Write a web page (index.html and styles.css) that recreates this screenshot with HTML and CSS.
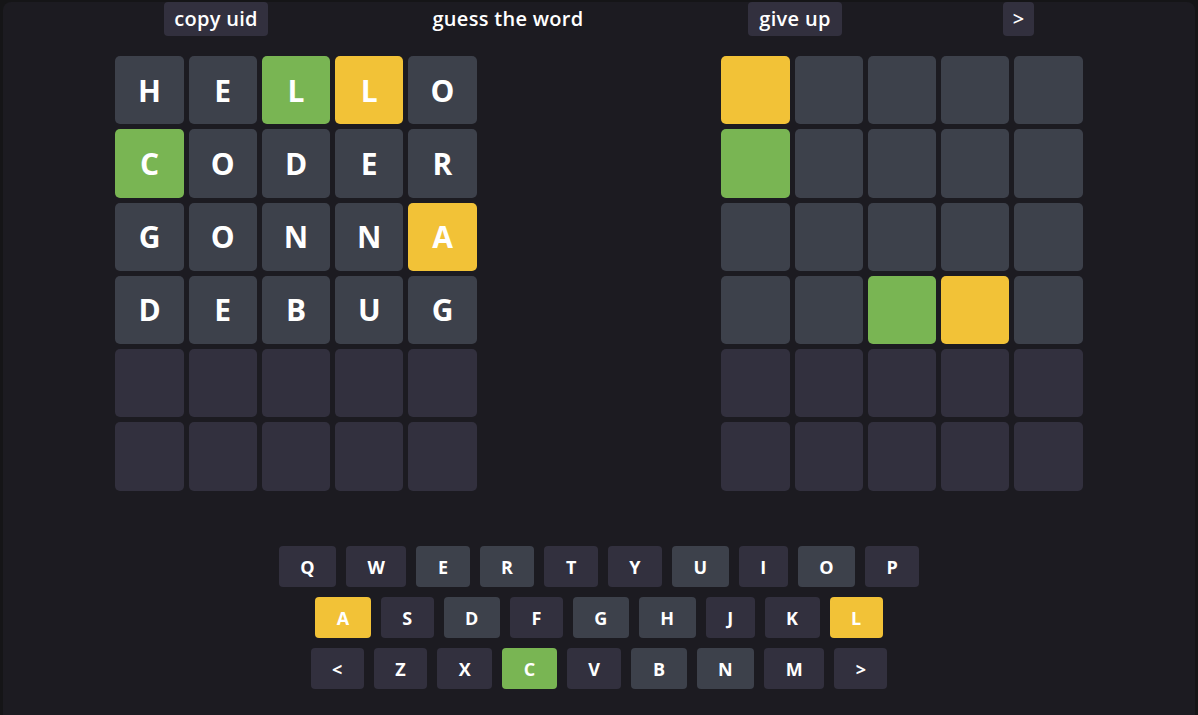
FILE: index.html
```html
<!DOCTYPE html>
<html>
<head>
<meta charset="utf-8">
<title>guess the word</title>
<link rel="stylesheet" href="styles.css">
</head>
<body>
<div class="app">
  <header class="topbar">
    <button class="btn btn-copy">copy uid</button>
    <div class="title">guess the word</div>
    <button class="btn btn-give">give up</button>
    <button class="btn btn-next">&gt;</button>
  </header>

  <main class="boards">
    <div class="board">
      <div class="tile gray">H</div><div class="tile gray">E</div><div class="tile green">L</div><div class="tile yellow">L</div><div class="tile gray">O</div>
      <div class="tile green">C</div><div class="tile gray">O</div><div class="tile gray">D</div><div class="tile gray">E</div><div class="tile gray">R</div>
      <div class="tile gray">G</div><div class="tile gray">O</div><div class="tile gray">N</div><div class="tile gray">N</div><div class="tile yellow">A</div>
      <div class="tile gray">D</div><div class="tile gray">E</div><div class="tile gray">B</div><div class="tile gray">U</div><div class="tile gray">G</div>
      <div class="tile"></div><div class="tile"></div><div class="tile"></div><div class="tile"></div><div class="tile"></div>
      <div class="tile"></div><div class="tile"></div><div class="tile"></div><div class="tile"></div><div class="tile"></div>
    </div>
    <div class="board">
      <div class="tile yellow"></div><div class="tile gray"></div><div class="tile gray"></div><div class="tile gray"></div><div class="tile gray"></div>
      <div class="tile green"></div><div class="tile gray"></div><div class="tile gray"></div><div class="tile gray"></div><div class="tile gray"></div>
      <div class="tile gray"></div><div class="tile gray"></div><div class="tile gray"></div><div class="tile gray"></div><div class="tile gray"></div>
      <div class="tile gray"></div><div class="tile gray"></div><div class="tile green"></div><div class="tile yellow"></div><div class="tile gray"></div>
      <div class="tile"></div><div class="tile"></div><div class="tile"></div><div class="tile"></div><div class="tile"></div>
      <div class="tile"></div><div class="tile"></div><div class="tile"></div><div class="tile"></div><div class="tile"></div>
    </div>
  </main>

  <section class="keyboard">
    <div class="krow">
      <button class="key">Q</button><button class="key">W</button><button class="key gray">E</button><button class="key gray">R</button><button class="key">T</button><button class="key">Y</button><button class="key gray">U</button><button class="key">I</button><button class="key gray">O</button><button class="key">P</button>
    </div>
    <div class="krow">
      <button class="key yellow">A</button><button class="key">S</button><button class="key gray">D</button><button class="key">F</button><button class="key gray">G</button><button class="key gray">H</button><button class="key">J</button><button class="key">K</button><button class="key yellow">L</button>
    </div>
    <div class="krow">
      <button class="key">&lt;</button><button class="key">Z</button><button class="key">X</button><button class="key green">C</button><button class="key">V</button><button class="key gray">B</button><button class="key gray">N</button><button class="key">M</button><button class="key">&gt;</button>
    </div>
  </section>
</div>
</body>
</html>
```

FILE: styles.css
```css
* { box-sizing: border-box; }

html, body {
  margin: 0;
  height: 100%;
  overflow: hidden;
  background: #151517;
}

body {
  padding: 2px 3px 0 3px;
  font-family: "Open Sans", "Noto Sans", sans-serif;
  color: #ffffff;
}

.app {
  height: 760px;
  background: #1c1b21;
  border-radius: 8px;
}

.topbar {
  display: flex;
  justify-content: space-evenly;
  align-items: center;
  height: 34px;
}

.btn {
  height: 34px;
  border: none;
  border-radius: 4px;
  background: #32303e;
  color: #ffffff;
  font-family: inherit;
  font-size: 20px;
  font-weight: 600;
  letter-spacing: 0.3px;
  padding: 0 0 2px 0;
  cursor: pointer;
}

.btn-copy { width: 104px; }
.btn-give { width: 94px; }
.btn-next { width: 31px; }

.title {
  width: 158px;
  text-align: center;
  font-size: 20px;
  font-weight: 600;
  letter-spacing: 0.3px;
  white-space: nowrap;
  padding-bottom: 2px;
}

.boards {
  display: flex;
  justify-content: center;
  gap: 244.75px;
  margin-top: 20px;
}

.board {
  display: grid;
  grid-template-columns: repeat(5, 68.25px);
  grid-auto-rows: 68.25px;
  column-gap: 5px;
  row-gap: 5px;
}

.tile {
  border-radius: 5px;
  background: #32303e;
  display: flex;
  align-items: center;
  justify-content: center;
  font-size: 30px;
  font-weight: 700;
  color: #ffffff;
}

.gray { background: #3d414b; }
.green { background: #79b553; }
.yellow { background: #f2c237; }

.keyboard {
  margin-top: 55.5px;
  display: flex;
  flex-direction: column;
  align-items: center;
  gap: 10px;
}

.krow {
  display: flex;
  gap: 10px;
}

.key {
  height: 41px;
  padding: 0 21.5px;
  border: none;
  border-radius: 4px;
  background: #32303e;
  color: #ffffff;
  font-family: inherit;
  font-size: 18px;
  font-weight: 700;
  cursor: pointer;
}
.key.gray { background: #3d414b; }
.key.green { background: #79b553; }
.key.yellow { background: #f2c237; }
```
